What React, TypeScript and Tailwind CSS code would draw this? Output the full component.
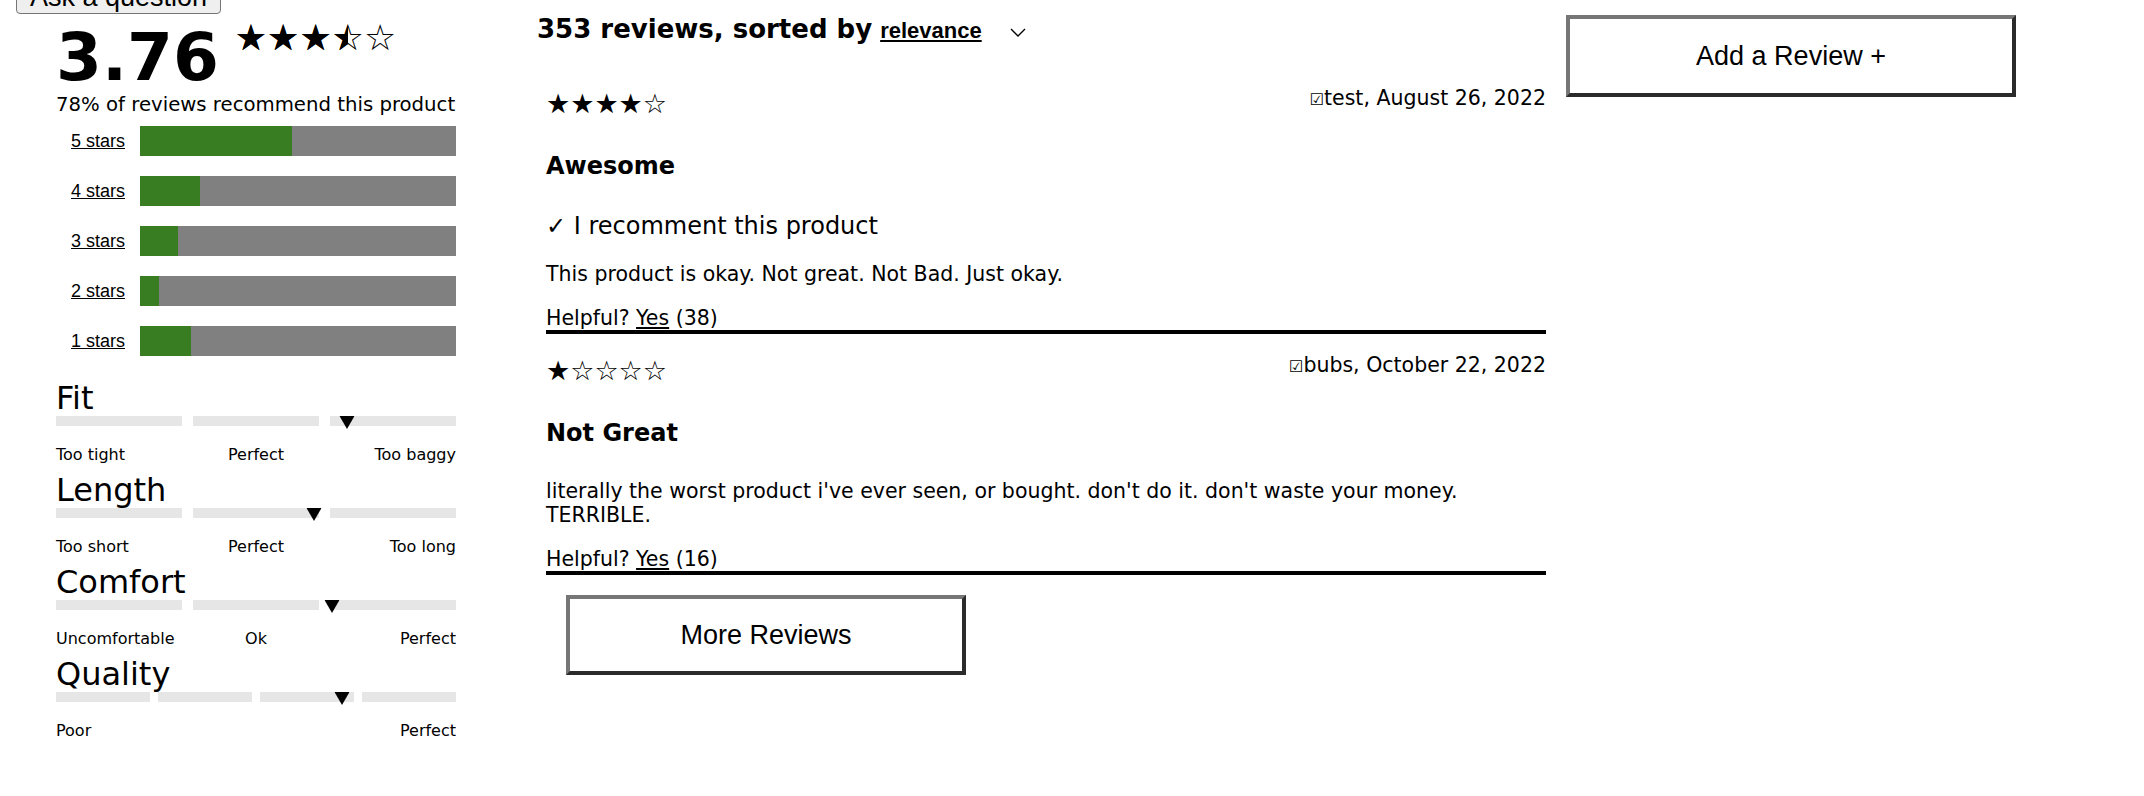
import React from 'react';

type Breakdown = { label: string; pct: number };
type Characteristic = {
  name: string;
  segments: number;
  marker: number;
  labels: string[];
};
type Review = {
  rating: number;
  user: string;
  date: string;
  title: string;
  recommend: boolean;
  body: string;
  helpful: number;
};

const average = 3.76;

const breakdown: Breakdown[] = [
  { label: '5 stars', pct: 48 },
  { label: '4 stars', pct: 19 },
  { label: '3 stars', pct: 12 },
  { label: '2 stars', pct: 6 },
  { label: '1 stars', pct: 16 },
];

const characteristics: Characteristic[] = [
  { name: 'Fit', segments: 3, marker: 72.75, labels: ['Too tight', 'Perfect', 'Too baggy'] },
  { name: 'Length', segments: 3, marker: 64.6, labels: ['Too short', 'Perfect', 'Too long'] },
  { name: 'Comfort', segments: 3, marker: 68.9, labels: ['Uncomfortable', 'Ok', 'Perfect'] },
  { name: 'Quality', segments: 4, marker: 71.6, labels: ['Poor', 'Perfect'] },
];

const reviews: Review[] = [
  {
    rating: 4,
    user: 'test',
    date: 'August 26, 2022',
    title: 'Awesome',
    recommend: true,
    body: 'This product is okay. Not great. Not Bad. Just okay.',
    helpful: 38,
  },
  {
    rating: 1,
    user: 'bubs',
    date: 'October 22, 2022',
    title: 'Not Great',
    recommend: false,
    body: "literally the worst product i've ever seen, or bought. don't do it. don't waste your money. TERRIBLE.",
    helpful: 16,
  },
];

function starString(rating: number) {
  return '★'.repeat(rating) + '☆'.repeat(5 - rating);
}

// outline row with a clipped filled row on top, so partial stars show
function AverageStars({ rating }: { rating: number }) {
  const fill = (Math.floor(rating * 2) / 2 / 5) * 100;
  return (
    <span className="relative ml-[16px] -mt-[5px] inline-block whitespace-nowrap text-[36px] leading-[36px]">
      ☆☆☆☆☆
      <span
        className="absolute left-0 top-0 overflow-hidden whitespace-nowrap"
        style={{ width: `${fill}%` }}
      >
        ★★★★★
      </span>
    </span>
  );
}

function Chevron() {
  return (
    <svg width="16" height="9" viewBox="0 0 16 9" className="ml-[28px] translate-y-[2px] self-center">
      <path d="M1 1L8 8L15 1" fill="none" stroke="black" strokeWidth="1.4" />
    </svg>
  );
}

function Marker({ left }: { left: number }) {
  return (
    <svg
      width="15"
      height="13"
      viewBox="0 0 15 13"
      className="absolute top-0 -translate-x-1/2"
      style={{ left: `${left}%` }}
    >
      <path d="M0 0H15L7.5 13Z" fill="black" />
    </svg>
  );
}

function CharacteristicRow({ item }: { item: Characteristic }) {
  const segClass =
    item.segments === 4 ? 'h-full w-[94px] bg-[#e6e6e6]' : 'h-full w-[126px] bg-[#e6e6e6]';
  return (
    <div className="mb-[7px]">
      <div className="pt-px text-[32px] leading-[36px]">{item.name}</div>
      <div className="relative flex h-[10px] justify-between">
        {Array.from({ length: item.segments }).map((_, i) => (
          <div key={i} className={segClass} />
        ))}
        <Marker left={item.marker} />
      </div>
      {item.labels.length === 3 ? (
        <div className="mt-[19px] grid grid-cols-3 text-[16px] leading-[19px]">
          <span className="text-left">{item.labels[0]}</span>
          <span className="text-center">{item.labels[1]}</span>
          <span className="text-right">{item.labels[2]}</span>
        </div>
      ) : (
        <div className="mt-[19px] flex justify-between text-[16px] leading-[19px]">
          <span>{item.labels[0]}</span>
          <span>{item.labels[1]}</span>
        </div>
      )}
    </div>
  );
}

function ReviewCard({ review }: { review: Review }) {
  return (
    <article className="border-b-4 border-black pt-[19px]">
      <div className="flex h-[36px] items-start justify-between">
        <span className="mt-[4px] text-[27px] leading-[27px]">{starString(review.rating)}</span>
        <span className="text-[20.5px] leading-[24px]">
          <span className="text-[16px]">☑</span>
          {review.user}, {review.date}
        </span>
      </div>
      <h3 className="mt-[30px] mb-[31px] text-[24px] font-bold leading-[29px]">{review.title}</h3>
      {review.recommend && (
        <div className="mb-[21px] text-[24px] leading-[29px]">✓ I recomment this product</div>
      )}
      <p className="mb-[20px] text-[20.5px] leading-[24px]">{review.body}</p>
      <div className="text-[20.5px] leading-[24px]">
        Helpful?{' '}
        <a href="#" className="underline">
          Yes
        </a>{' '}
        ({review.helpful})
      </div>
    </article>
  );
}

const outsetButton =
  "border-4 border-t-[#767676] border-l-[#767676] border-r-[#2b2b2b] border-b-[#2b2b2b] bg-white font-['Liberation_Sans',Arial,sans-serif] text-[27px] text-black";

export default function App() {
  return (
    <div className="min-h-screen w-full overflow-hidden bg-white font-['DejaVu_Sans',sans-serif] text-black">
      <div className="flex items-start pl-4">
        <aside className="w-[440px] shrink-0">
          <button
            type="button"
            className="-mt-5 block h-[34px] w-[205px] rounded-[4px] border border-[#767676] bg-[#efefef] font-['Liberation_Sans',Arial,sans-serif] text-[27px] leading-[30px]"
          >
            Ask a question
          </button>
          <div className="ml-10 w-[400px]">
            <div className="mt-[11px] flex items-start">
              <span className="text-[66px] font-bold leading-[66px]">{average}</span>
              <AverageStars rating={average} />
            </div>
            <div className="mt-[2px] whitespace-nowrap text-[19.7px] leading-[24px]">
              78% of reviews recommend this product
            </div>

            <div className="mt-[9px] flex flex-col gap-5">
              {breakdown.map((row) => (
                <div key={row.label} className="flex h-[30px] items-center">
                  <a
                    href="#"
                    className="w-[84px] text-center font-['Liberation_Sans',Arial,sans-serif] text-[18px] leading-[21px] underline"
                  >
                    {row.label}
                  </a>
                  <div className="h-full flex-1 bg-[#808080]">
                    <div className="h-full bg-[#387d22]" style={{ width: `${row.pct}%` }} />
                  </div>
                </div>
              ))}
            </div>

            <div className="mt-[23px]">
              {characteristics.map((c) => (
                <CharacteristicRow key={c.name} item={c} />
              ))}
            </div>
          </div>
        </aside>

        <main className="ml-[81px] w-[1009px] shrink-0">
          <div className="mt-[14px] flex items-baseline">
            <h2 className="text-[26px] font-bold leading-[31px]">353 reviews, sorted by</h2>
            <span className="ml-[8px] font-['Liberation_Sans',Arial,sans-serif] text-[22px] font-bold leading-[31px] underline">
              relevance
            </span>
            <Chevron />
          </div>
          <div className="ml-[9px] mt-[21px] w-[1000px]">
            {reviews.map((r) => (
              <ReviewCard key={r.user} review={r} />
            ))}
          </div>
          <button type="button" className={`ml-[29px] mt-[20px] h-[80px] w-[400px] ${outsetButton}`}>
            More Reviews
          </button>
        </main>

        <div className="ml-[20px] shrink-0">
          <button type="button" className={`mt-[15px] h-[82px] w-[450px] ${outsetButton}`}>
            Add a Review +
          </button>
        </div>
      </div>
    </div>
  );
}
